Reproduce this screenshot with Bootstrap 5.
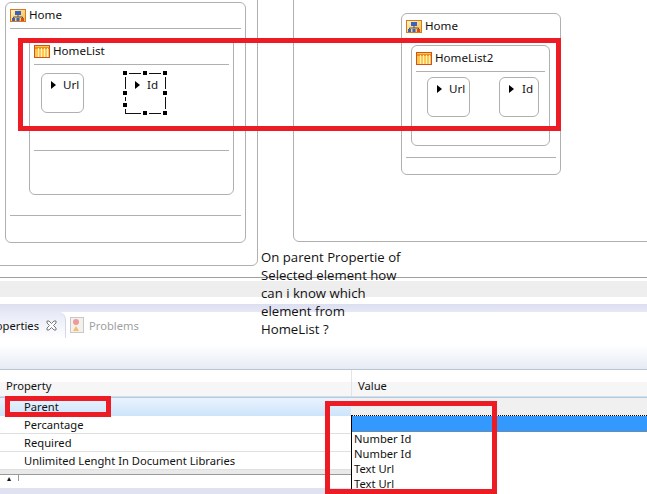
<!DOCTYPE html>
<html lang="en"><head><meta charset="utf-8"><title>Diagram</title>
<link href="https://cdn.jsdelivr.net/npm/bootstrap@5.3.0/dist/css/bootstrap.min.css" rel="stylesheet">
<style>
html,body{background:#fff;margin:0;height:494px;overflow:hidden}
.page{width:647px;height:494px;overflow:hidden;font:11.2px/15px "Noto Sans",sans-serif;color:#111}
.canvas{height:278px;border-bottom:1px solid #a0a0a0}
.nd{border:1px solid #b0b0b0;border-radius:6px;background:#fff}
.sheet{position:absolute;left:-20px;top:-20px;width:278px;height:286px;border:1px solid #b0b0b0;border-radius:6px}
.sheet2{position:absolute;left:293px;top:-20px;width:400px;height:262px;border:1px solid #b0b0b0;border-radius:6px}
.home1{position:absolute;left:5px;top:2px;width:241px;height:241px}
.home2{position:absolute;left:401px;top:13px;width:160px;height:162px}
.ttl{height:25px;padding:0 0 2px 4px;gap:3px;font-size:11.6px;color:#111}
.ttl svg{margin-top:2px}
.rule{height:1px;background:#b0b0b0;margin:0 4px}
.list1{margin:9px 11px 0 23px;height:157px}
.list2{margin:5px 10px 0 9px;height:101px}
.kids{height:85px}
.list1 .kids{padding:8px 0 0 11px;gap:41px}
.list2 .kids{height:auto;padding:5px 0 0 15px;gap:29px}
.attr{width:43px;height:40px;border:1px solid #b0b0b0;border-radius:6px;padding:3px 0 0 9px;gap:7px;font-size:11.6px}
.attr-sel{width:41px;height:41px;border:1px solid #111;position:relative;padding:3px 0 0 9px;gap:7px;font-size:11.6px}
.list2 .attr+.attr{width:40px;padding-left:9px;gap:8px}
.tri{width:0;height:0;border-left:5px solid #000;border-top:4.500px solid transparent;border-bottom:4.500px solid transparent;margin-top:4px;flex:none}
.hd{position:absolute;width:4px;height:4px;background:#000;box-shadow:0 0 0 2px #fff}
.h1{left:-3px;top:-3px}.h2{left:17px;top:-3px}.h3{right:-2px;top:-3px}
.h4{left:-3px;top:17px}.h5{right:-2px;top:17px}
.h6{left:-3px;bottom:-2px}.h7{left:17px;bottom:-2px}.h8{right:-2px;bottom:-2px}
.gap1{height:20px}
.gap2{height:11px}
.band-a{height:3px}
.band-b{height:16px;background:#eeeeee}
.band-c{height:7px}
.band-d{height:8px;background:linear-gradient(#dcdff0,#e6e8f5)}
.tabs{height:58px;background:linear-gradient(#fff 0,#fff 58%,#e6ebf3 100%);border-bottom:1px solid #b9c6d4}
.tabbar{height:26px}
.tabon{width:66px;height:26px;border-right:1px solid #d4d8e6;border-top-right-radius:8px;background:linear-gradient(#e6e9f6,#fff);gap:7px;overflow:hidden;justify-content:flex-end;padding-right:8px;white-space:nowrap}
.taboff{gap:5px;padding-left:4px;color:#a0a0a0}
.thead{height:27px;background:linear-gradient(#fff 0,#fff 48%,#f6f6f6 48%);border-bottom:1px solid #dcdcdc}
.th1{width:351px;padding:8px 0 0 6px}
.th2{padding:8px 0 0 6px;border-left:1px solid #e4e4e4;flex:1}
.tr{height:18px;border-bottom:1px solid #e0e0e0;padding:1px 0 0 24px;line-height:16px}
.tr-sel{background:linear-gradient(#e9f3fe,#cde4fb);border-top:1px solid #a7cdf0}
.c1{width:351px;flex:none}
.val{flex:1;background:#f0f0f0}
.sbar{height:18px;background:#fff}
.sb-top{height:5px;background:#e9e9e9;border-bottom:1px solid #9a9a9a}
.sb-btn{width:19px;height:6px;border-right:1px solid #9a9a9a;font-size:8px;line-height:6px;text-align:center}
.foot{height:6px;background:#e0e2f2}
.note{position:absolute;left:261px;top:248px;width:150px;font:13.2px/18px "Open Sans",sans-serif;color:#111;white-space:nowrap}
.combo{position:absolute;left:351px;top:415px;width:300px;height:80px;background:#fff;border-left:1px solid #000;border-top:1px dotted #000;padding-top:15px}
.combo-sel{position:absolute;left:0;right:0;top:0;height:16px;background:#3399ff;border-bottom:1px dotted #a08050}
.combo-item{padding-left:2px;height:15px;line-height:15px}
.mark-a,.mark-b,.mark-c{position:absolute;border:5px solid #ed1c24}
.mark-a{left:18px;top:38px;width:543px;height:93px}
.mark-b{left:5px;top:396px;width:106px;height:21px}
.mark-c{left:325px;top:401px;width:172px;height:93px}
svg{display:block;flex:none}
</style></head><body>
<svg width="0" height="0" class="position-absolute"><defs>
<linearGradient id="g1" x1="0" y1="0" x2="1" y2="1"><stop offset="0" stop-color="#fff6c8"/><stop offset="1" stop-color="#f8b840"/></linearGradient>
<symbol id="ico-home" viewBox="0 0 16 13"><rect x=".5" y=".5" width="15" height="12" fill="url(#g1)" stroke="#d67a20"/><rect x="5" y="2" width="6" height="4" fill="#3a62c0"/><path d="M8 6v2M3.500 10V8h9v2" stroke="#555" fill="none"/><rect x="2" y="9" width="3" height="3" fill="#3a62c0"/><rect x="6.500" y="9" width="3" height="3" fill="#3a62c0"/><rect x="11" y="9" width="3" height="3" fill="#d84a20"/></symbol>
<symbol id="ico-list" viewBox="0 0 16 13"><rect x=".5" y=".5" width="15" height="12" fill="#fcc850" stroke="#d0521c"/><path d="M1 3h14" stroke="#f09018" stroke-width="2"/><path d="M4.500 3v9M7.500 3v9M10.500 3v9M13.500 3v9" stroke="#fff2c0"/></symbol>
</defs></svg>
<div class="page position-relative">
  <div class="canvas position-relative overflow-hidden">
    <div class="sheet"></div>
    <div class="sheet2"></div>
    <div class="nd home1">
      <div class="ttl d-flex align-items-center"><svg width="16" height="13"><use href="#ico-home"/></svg><span>Home</span></div>
      <div class="rule"></div>
      <div class="nd list1">
        <div class="ttl d-flex align-items-center"><svg width="16" height="13"><use href="#ico-list"/></svg><span>HomeList</span></div>
        <div class="rule"></div>
        <div class="kids d-flex align-items-start">
          <div class="attr d-flex"><i class="tri"></i><span>Url</span></div>
          <div class="attr-sel d-flex"><i class="tri"></i><span>Id</span>
            <i class="hd h1"></i><i class="hd h2"></i><i class="hd h3"></i><i class="hd h4"></i><i class="hd h5"></i><i class="hd h6"></i><i class="hd h7"></i><i class="hd h8"></i>
          </div>
        </div>
        <div class="rule"></div>
      </div>
      <div class="gap1"></div>
      <div class="rule"></div>
    </div>
    <div class="nd home2">
      <div class="ttl d-flex align-items-center"><svg width="16" height="13"><use href="#ico-home"/></svg><span>Home</span></div>
      <div class="rule"></div>
      <div class="nd list2">
        <div class="ttl d-flex align-items-center"><svg width="16" height="13"><use href="#ico-list"/></svg><span>HomeList2</span></div>
        <div class="rule"></div>
        <div class="kids d-flex align-items-start">
          <div class="attr d-flex"><i class="tri"></i><span>Url</span></div>
          <div class="attr d-flex"><i class="tri"></i><span>Id</span></div>
        </div>
      </div>
      <div class="gap2"></div>
      <div class="rule"></div>
    </div>
  </div>
  <div class="band-a"></div><div class="band-b"></div><div class="band-c"></div><div class="band-d"></div>
  <div class="tabs">
    <div class="tabbar d-flex">
      <div class="tabon d-flex align-items-center"><span>Properties</span><svg width="11" height="11" viewBox="0 0 11 11"><path d="M1 1h2l2.500 2.500L8 1h2v2L7.500 5.500 10 8v2H8L5.500 7.500 3 10H1V8l2.500-2.500L1 3z" fill="#fff" stroke="#777"/></svg></div>
      <div class="taboff d-flex align-items-center"><svg width="14" height="16" viewBox="0 0 14 16"><rect x=".5" y=".5" width="13" height="15" fill="#f4f0ec" stroke="#c8c8c8"/><circle cx="6" cy="5" r="3" fill="#ee9a9a"/><path d="M3 14l3-5 3 5z" fill="#f0c070"/></svg><span>Problems</span></div>
    </div>
  </div>
  <div class="thead d-flex"><div class="th1">Property</div><div class="th2">Value</div></div>
  <div class="d-flex tr-sel"><div class="c1 tr border-0">Parent</div><div class="val"></div></div>
  <div class="tr">Percantage</div>
  <div class="tr">Required</div>
  <div class="tr">Unlimited Lenght In Document Libraries</div>
  <div class="sbar"><div class="sb-top"></div><div class="sb-btn">&#9652;</div></div>
  <div class="foot"></div>

  <div class="combo">
    <div class="combo-sel"></div>
    <div class="combo-item">Number Id</div>
    <div class="combo-item">Number Id</div>
    <div class="combo-item">Text Url</div>
    <div class="combo-item">Text Url</div>
  </div>
  <div class="note">On parent Propertie of<br>Selected element how<br>can i know which<br>element from<br>HomeList ?</div>
  <div class="mark-a"></div><div class="mark-b"></div><div class="mark-c"></div>
</div>
<script src="https://cdn.jsdelivr.net/npm/bootstrap@5.3.0/dist/js/bootstrap.bundle.min.js"></script>
</body></html>
